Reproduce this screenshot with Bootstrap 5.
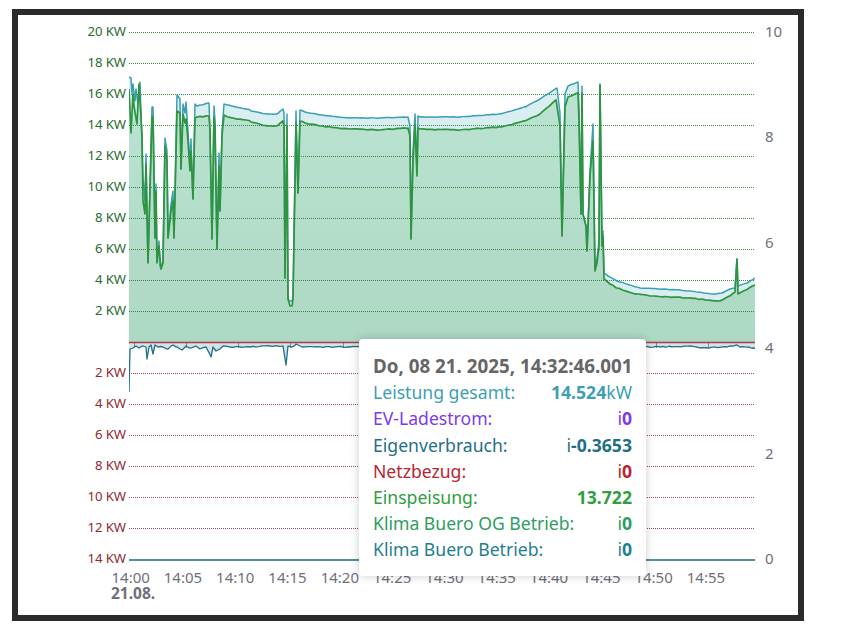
<!DOCTYPE html>
<html lang="de">
<head>
<meta charset="UTF-8">
<meta name="viewport" content="width=device-width, initial-scale=1.0">
<title>Leistung</title>
<link href="https://cdn.jsdelivr.net/npm/bootstrap@5.3.0/dist/css/bootstrap.min.css" rel="stylesheet">
<style>
body {
    background: #fff;
    font-family: "Noto Sans", "Open Sans", sans-serif;
}
.chart-frame {
    width: 792px;
    height: 612px;
    margin: 9px 0 0 12px;
    border: 6px solid #2b2b2b;
}
.chart-area { height: 560px; padding-top: .5px; }
.y-left { width: 111px; font-size: 13.2px; }
.y-left > div { height: 31px; line-height: 31px; padding-right: 3px; text-align: right; letter-spacing: -.1px; }
.y-plus { color: #2b6b2f; }
.y-minus { color: #8f2a30; }
.chart-svg { display: block; width: 626px; height: 560px; flex: none; }
.y-right { padding-left: 10px; font-size: 15px; color: #6e7079; }
.y-right > div { height: 105.6px; line-height: 31px; }
.x-axis { padding-left: 86.5px; color: #6e7079; font-size: 15px; line-height: 16px; margin-top: -6px; }
.x-axis > div { width: 52.3px; text-align: center; flex: none; white-space: nowrap; }
.x-date { padding-left: 93px; color: #6e7079; font-size: 15.5px; line-height: 16px; font-weight: 700; }
.chart-tip {
    position: absolute;
    left: 341px;
    top: 324px;
    width: 287px;
    height: 237px;
    padding: 14px 14px 0;
    background: #fff;
    border-radius: 4px;
    box-shadow: 0 0 10px rgba(0, 0, 0, .2);
    font-size: 17.6px;
    line-height: 26.2px;
    white-space: nowrap;
}
.tip-title { color: #666; font-weight: 700; font-size: 18.8px; }
.tip-row b { font-weight: 700; }
.c-total { color: #3d9fb2; }
.c-ev { color: #7c3aed; }
.c-own { color: #1f6f86; }
.c-grid { color: #b8252f; }
.c-feed { color: #2f9e3f; }
.c-og { color: #2e9e5f; }
.c-buero { color: #1f7f8f; }
</style>
</head>
<body>
<div class="chart-frame position-relative">
    <div class="chart-area d-flex">
        <div class="y-left flex-none">
            <div class="y-plus">20 KW</div>
            <div class="y-plus">18 KW</div>
            <div class="y-plus">16 KW</div>
            <div class="y-plus">14 KW</div>
            <div class="y-plus">12 KW</div>
            <div class="y-plus">10 KW</div>
            <div class="y-plus">8 KW</div>
            <div class="y-plus">6 KW</div>
            <div class="y-plus">4 KW</div>
            <div class="y-plus">2 KW</div>
            <div></div>
            <div class="y-minus">2 KW</div>
            <div class="y-minus">4 KW</div>
            <div class="y-minus">6 KW</div>
            <div class="y-minus">8 KW</div>
            <div class="y-minus">10 KW</div>
            <div class="y-minus">12 KW</div>
            <div class="y-minus">14 KW</div>
        </div>
        <svg class="chart-svg" id="plot" viewBox="129 15 626 560" xmlns="http://www.w3.org/2000/svg">
            <defs>
                <linearGradient id="feedFill" gradientUnits="userSpaceOnUse" x1="0" y1="80" x2="0" y2="341">
                    <stop offset="0" stop-color="#bbe3d1"/>
                    <stop offset="1" stop-color="#add8c4"/>
                </linearGradient>
            </defs>
        </svg>
        <div class="y-right">
            <div>10</div>
            <div>8</div>
            <div>6</div>
            <div>4</div>
            <div>2</div>
            <div>0</div>
        </div>
    </div>
    <div class="x-axis d-flex">
        <div>14:00</div><div>14:05</div><div>14:10</div><div>14:15</div><div>14:20</div><div>14:25</div>
        <div>14:30</div><div>14:35</div><div>14:40</div><div>14:45</div><div>14:50</div><div>14:55</div>
    </div>
    <div class="x-date">21.08.</div>

    <div class="chart-tip">
        <div class="tip-title">Do, 08 21. 2025, 14:32:46.001</div>
        <div class="tip-row d-flex justify-content-between c-total"><span>Leistung gesamt:</span><span><b>14.524</b>kW</span></div>
        <div class="tip-row d-flex justify-content-between c-ev"><span>EV-Ladestrom:</span><span>i<b>0</b></span></div>
        <div class="tip-row d-flex justify-content-between c-own"><span>Eigenverbrauch:</span><span>i<b>-0.3653</b></span></div>
        <div class="tip-row d-flex justify-content-between c-grid"><span>Netzbezug:</span><span>i<b>0</b></span></div>
        <div class="tip-row d-flex justify-content-between c-feed"><span>Einspeisung:</span><span><b>13.722</b></span></div>
        <div class="tip-row d-flex justify-content-between c-og"><span>Klima Buero OG Betrieb:</span><span>i<b>0</b></span></div>
        <div class="tip-row d-flex justify-content-between c-buero"><span>Klima Buero Betrieb:</span><span>i<b>0</b></span></div>
    </div>
</div>

<script>
// Messwerte in Plot-Koordinaten (x, y)
const gesamt = [129,76, 131,77, 132,92, 133,83, 135,100, 136,88, 138,103, 140,81, 141,113, 143,177, 145,200, 146,153, 148,260, 152,106, 153,106, 155,237, 156,183, 157,260, 159,240, 160,265, 161,268, 163,260, 165,137, 167,150, 168,237, 171,203, 173,190, 174,237, 177,94, 180,98, 181,168, 183,103, 185,112, 186,101, 188,130, 190,165, 191,138, 193,198, 195,103, 197,105, 209,102, 210,130, 212,238, 214,105, 215,120, 217,248, 219,152, 220,210, 222,130, 224,103, 228,104, 250,109, 251,110, 267,113, 277,113, 283,108, 284,112, 285,277, 287,113, 288,296, 289,300, 292,300, 293,296, 296,110, 298,192, 300,109, 305,111, 320,114, 350,117, 380,117, 408,116, 410,125, 411,238, 413,150, 415,113, 417,170, 418,115, 420,116, 460,116, 500,113, 525,106, 540,98, 557,87, 560,112, 562,235, 565,93, 568,85, 578,81, 579,110, 581,213, 582,85, 583,213, 586,225, 587,250, 590,170, 593,123, 595,268, 597,257, 599,240, 600,83, 602,240, 603,230, 604,272, 608,275, 617,280, 640,287, 680,289, 713,293, 722,292, 730,288, 735,287, 737,258, 738,285, 747,282, 755,277];
const einspeisung = [129,88, 131,132, 133,93, 134,105, 137,123, 139,83, 142,133, 143,200, 145,213, 146,163, 148,262, 152,116, 153,116, 155,237, 156,190, 157,262, 159,245, 161,268, 163,262, 165,145, 167,160, 168,237, 171,210, 173,200, 174,237, 177,110, 180,112, 181,168, 183,113, 185,122, 186,118, 188,140, 190,170, 191,150, 193,198, 195,117, 197,116, 209,115, 210,130, 212,238, 214,116, 215,125, 217,248, 219,165, 220,210, 222,135, 224,114, 228,116, 250,120, 251,121, 267,125, 277,125, 283,120, 284,125, 285,277, 287,125, 288,298, 290,305, 292,305, 293,298, 296,122, 298,192, 300,120, 305,122, 320,125, 350,128, 380,129, 408,127, 410,135, 411,238, 413,160, 415,124, 417,175, 418,127, 420,128, 460,129, 500,126, 525,120, 540,113, 556,99, 560,125, 562,235, 565,106, 568,96, 578,92, 579,120, 581,213, 582,92, 583,213, 586,225, 587,250, 590,175, 593,140, 595,270, 597,262, 599,245, 600,84, 602,245, 603,235, 604,278, 610,283, 617,287, 632,292, 650,295, 687,297, 720,300, 730,295, 735,291, 737,258, 738,293, 755,284];
const eigen = [129,391, 130,348, 133,347, 136,345, 139,347, 143,345, 146,346, 147,358, 149,346, 151,344, 153,353, 155,344, 158,346, 163,346, 168,348, 173,344, 177,346, 182,349, 186,345, 191,347, 196,345, 200,348, 206,346, 211,356, 213,346, 216,350, 220,348, 223,345, 230,346, 250,346, 270,345, 283,345, 286,364, 288,345, 292,346, 296,343, 302,346, 350,346, 450,346, 560,346, 660,346, 690,345, 700,347, 727,346, 737,344, 740,346, 755,347];

const svg = document.getElementById('plot');
const NS = 'http://www.w3.org/2000/svg';

function add(tag, attrs) {
    const el = document.createElementNS(NS, tag);
    for (const k in attrs) el.setAttribute(k, attrs[k]);
    svg.appendChild(el);
}
function pts(a) {
    let s = '';
    for (let i = 0; i < a.length; i += 2) s += a[i] + ',' + a[i + 1] + ' ';
    return s;
}
// lange Abschnitte mit kleinem Rauschen auffuellen
function rough(a, amp) {
    const out = [];
    let seed = 7;
    for (let i = 0; i < a.length - 2; i += 2) {
        out.push(a[i], a[i + 1]);
        const dx = a[i + 2] - a[i];
        for (let s = 3; s < dx; s += 3) {
            seed = (seed * 31 + 11) % 101;
            out.push(a[i] + s, a[i + 1] + (a[i + 3] - a[i + 1]) * s / dx + (seed / 100 - .5) * amp);
        }
    }
    out.push(a[a.length - 2], a[a.length - 1]);
    return out;
}

const lineGesamt = rough(gesamt, .5);
const lineFeed = rough(einspeisung, .9);
const lineEigen = rough(eigen, 1.2);

// Flaechen
add('polygon', { points: '129,341 ' + pts(lineGesamt) + '755,341', fill: '#d8eef0' });
add('polygon', { points: '129,341 ' + pts(lineFeed) + '755,341', fill: 'url(#feedFill)' });
add('polygon', { points: '129,342 ' + pts(lineEigen) + '755,342', fill: '#d5e3e6' });

// Gitterlinien
for (let i = 0; i < 10; i++) {
    const y = 31.5 + i * 31;
    add('line', { x1: 129, x2: 755, y1: y, y2: y, stroke: '#1f7a26', 'stroke-dasharray': '1 1', 'stroke-opacity': .85 });
}
for (let i = 1; i < 7; i++) {
    const y = 341.5 + i * 31;
    add('line', { x1: 129, x2: 755, y1: y, y2: y, stroke: '#96222a', 'stroke-dasharray': '1 1', 'stroke-opacity': .85 });
}

// Ticks und Nulllinien
for (let i = 0; i < 12; i++) {
    const x = Math.round(133.5 + i * 52.25) + .5;
    add('line', { x1: x, x2: x, y1: 342, y2: 347, stroke: '#6e7079', 'stroke-width': .8 });
}
add('line', { x1: 129, x2: 755, y1: 559, y2: 559, stroke: '#1b6a7a', 'stroke-width': 1.5 });

// Kurven
add('polyline', { points: pts(lineGesamt), fill: 'none', stroke: '#3a9fb2', 'stroke-width': 1.5, 'stroke-linejoin': 'round' });
add('polyline', { points: pts(lineFeed), fill: 'none', stroke: '#2f9440', 'stroke-width': 1.7, 'stroke-linejoin': 'round' });
add('polyline', { points: pts(lineEigen), fill: 'none', stroke: '#1f7088', 'stroke-width': 1.3, 'stroke-linejoin': 'round' });
add('line', { x1: 129, x2: 755, y1: 341.5, y2: 341.5, stroke: '#b13a4c', 'stroke-width': 1.5 });
</script>
<script src="https://cdn.jsdelivr.net/npm/bootstrap@5.3.0/dist/js/bootstrap.bundle.min.js"></script>
</body>
</html>
